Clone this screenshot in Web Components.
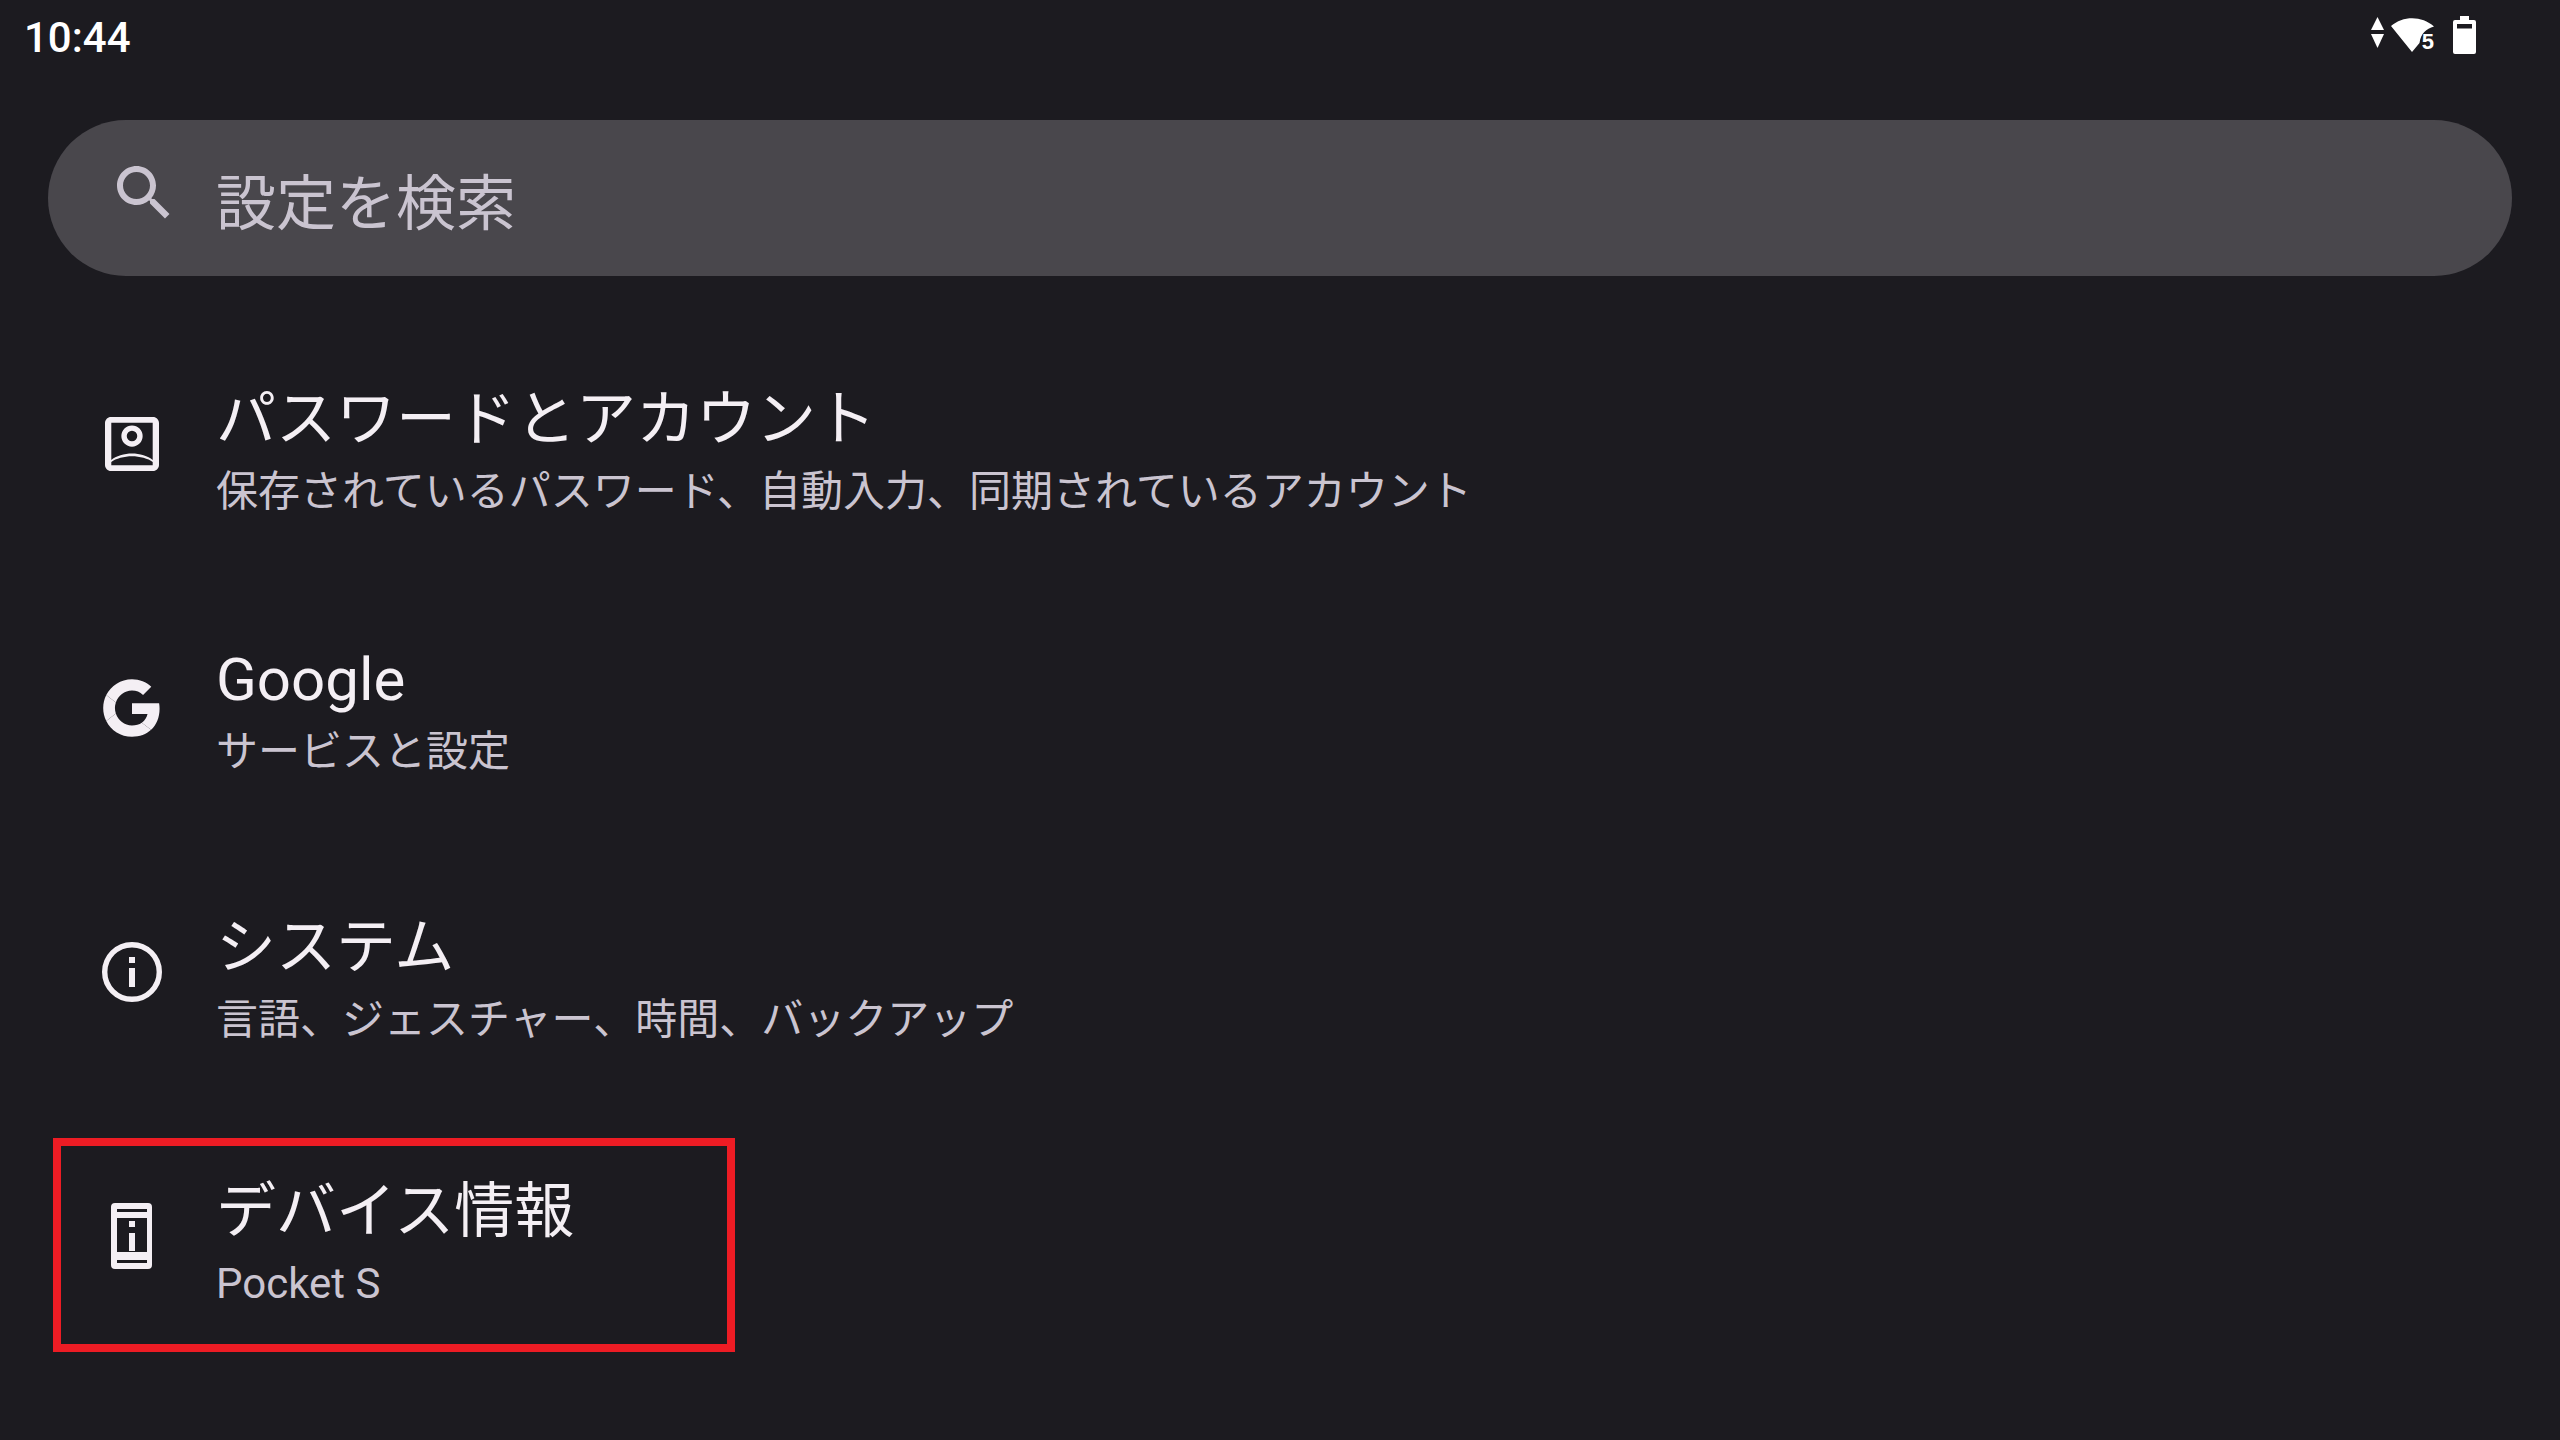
<!DOCTYPE html>
<html lang="ja">
<head>
<meta charset="utf-8">
<title>設定</title>
<style>
    html, body { margin: 0; background: #1c1b20; }
    body {
        width: 2560px;
        height: 1440px;
        overflow: hidden;
        font-family: Roboto, "Noto Sans CJK JP", sans-serif;
    }
</style>
</head>
<body>

<status-bar time="10:44"></status-bar>
<search-bar placeholder="設定を検索"></search-bar>

<settings-list>
    <settings-item title="パスワードとアカウント" summary="保存されているパスワード、自動入力、同期されているアカウント">
        <svg slot="icon" viewBox="0 0 24 24" width="72" height="72" fill="#f4eff4">
            <path fill-rule="evenodd" d="M5 3h14c1.100 0 2 .9 2 2v14c0 1.100-.9 2-2 2H5c-1.100 0-2-.9-2-2V5c0-1.100.9-2 2-2zm.1 1.900v12.400c1.500-1.200 4.400-2.100 6.900-2.100s5.400.9 6.900 2.100V4.900zM5.100 18v1.100h13.800V18c-1.500-1.150-4.400-1.900-6.900-1.900s-5.400.75-6.900 1.900z"/>
            <path fill-rule="evenodd" d="M12 5.800a3.550 3.550 0 1 1 0 7.100 3.550 3.550 0 0 1 0-7.100zm0 1.800a1.750 1.750 0 1 0 0 3.500 1.750 1.750 0 0 0 0-3.500z"/>
        </svg>
    </settings-item>
    <settings-item title="Google" summary="サービスと設定" style="--nudge: -8px">
        <svg slot="icon" viewBox="-6 -6 60 60" width="72" height="72" fill="#f4eff4">
            <path d="M24 9.500c3.540 0 6.710 1.220 9.210 3.600l6.850-6.850C35.900 2.380 30.470 0 24 0 14.620 0 6.510 5.380 2.560 13.220l7.980 6.190C12.430 13.720 17.740 9.500 24 9.500z"/>
            <path d="M46.980 24.550c0-1.570-.15-3.090-.38-4.550H24v9.020h12.940c-.58 2.960-2.260 5.480-4.780 7.180l7.730 6c4.510-4.180 7.090-10.360 7.090-17.650z"/>
            <path d="M10.530 28.590c-.48-1.450-.76-2.990-.76-4.590s.27-3.140.76-4.590l-7.980-6.190C.92 16.460 0 20.120 0 24c0 3.880.92 7.540 2.560 10.780l7.970-6.190z"/>
            <path d="M24 48c6.480 0 11.930-2.130 15.890-5.810l-7.730-6c-2.150 1.450-4.920 2.300-8.160 2.300-6.260 0-11.570-4.220-13.470-9.910l-7.980 6.190C6.510 42.620 14.620 48 24 48z"/>
        </svg>
    </settings-item>
    <settings-item title="システム" summary="言語、ジェスチャー、時間、バックアップ">
        <svg slot="icon" viewBox="0 0 72 72" width="72" height="72" fill="#f4eff4">
            <circle cx="36" cy="36" r="27.300" fill="none" stroke="#f4eff4" stroke-width="5.400"/>
            <rect x="33" y="21" width="6" height="6"/>
            <rect x="33" y="32" width="6" height="19"/>
        </svg>
    </settings-item>
    <settings-item title="デバイス情報" summary="Pocket S" highlight>
        <svg slot="icon" viewBox="0 0 72 72" width="72" height="72" fill="#f4eff4">
            <path fill-rule="evenodd" d="M19 3h33a4 4 0 0 1 4 4v58a4 4 0 0 1-4 4H19a4 4 0 0 1-4-4V7a4 4 0 0 1 4-4zm2 6v3h30V9zm0 9v34h30V18zm0 42v3h30v-3z"/>
            <rect x="33" y="21" width="6" height="6"/>
            <rect x="33" y="33" width="6" height="18"/>
        </svg>
    </settings-item>
</settings-list>

<script>
/* Status bar: clock on the left, signal icons on the right */
const statusTemplate = document.createElement('template');
statusTemplate.innerHTML = `
    <style>
        :host {
            display: flex;
            justify-content: space-between;
            height: 120px;
            padding: 0 84px 0 24px;
            color: #fff;
        }
        .time {
            font: 500 42px/76px Roboto, sans-serif;
        }
        .icons {
            display: flex;
            align-items: flex-start;
            padding-top: 16px;
        }
        .wifi {
            position: relative;
            width: 43px;
            height: 38px;
            margin: 2px 19px 0 7px;
        }
        .wifi span {
            position: absolute;
            right: 0;
            top: 14px;
            font: 700 22px/20px "Liberation Sans", sans-serif;
        }
        svg { display: block; }
    </style>
    <div class="time"></div>
    <div class="icons">
        <svg width="13" height="32" viewBox="0 0 13 32" fill="#fff">
            <path d="M6.500 1 13 14H0z"/>
            <path d="M0 18h13L6.500 32z"/>
        </svg>
        <div class="wifi">
            <svg width="43" height="34" viewBox="0 0 43 34" fill="#fff">
                <path d="M0 8C12-2.500 31-2.500 43 8.500 35 11 30 15 28.500 25L21 34z"/>
            </svg>
            <span>5</span>
        </div>
        <svg width="23" height="38" viewBox="0 0 23 38" fill="#fff">
            <path fill-rule="evenodd" d="M7 0h9v4h5a2 2 0 0 1 2 2v30a2 2 0 0 1-2 2H2a2 2 0 0 1-2-2V6a2 2 0 0 1 2-2h5zM4 8v4.500h15V8z"/>
        </svg>
    </div>
`;

class StatusBar extends HTMLElement {
    constructor() {
        super();
        this.attachShadow({ mode: 'open' });
        this.shadowRoot.appendChild(statusTemplate.content.cloneNode(true));
        this.shadowRoot.querySelector('.time').textContent = this.getAttribute('time');
    }
}
customElements.define('status-bar', StatusBar);


/* Search pill */
const searchTemplate = document.createElement('template');
searchTemplate.innerHTML = `
    <style>
        :host {
            display: flex;
            align-items: center;
            height: 156px;
            margin: 0 48px;
            padding-left: 60px;
            border-radius: 78px;
            background: #49474c;
            color: #cac4d0;
        }
        svg { display: block; margin-top: -10px; }
        .label {
            margin-left: 36px;
            margin-top: 2px;
            font: 400 60px/72px "Noto Sans CJK JP", sans-serif;
        }
    </style>
    <svg width="72" height="72" viewBox="0 0 24 24" fill="#cac4d0">
        <path d="M15.500 14h-.79l-.28-.27C15.410 12.590 16 11.110 16 9.500 16 5.910 13.090 3 9.500 3S3 5.910 3 9.500 5.910 16 9.500 16c1.610 0 3.090-.59 4.230-1.570l.27.28v.79l5 4.990L20.490 19l-4.990-5zm-6 0C7.010 14 5 11.990 5 9.500S7.010 5 9.500 5 14 7.010 14 9.500 11.990 14 9.500 14z"/>
    </svg>
    <div class="label"></div>
`;

class SearchBar extends HTMLElement {
    constructor() {
        super();
        this.attachShadow({ mode: 'open' });
        this.shadowRoot.appendChild(searchTemplate.content.cloneNode(true));
        this.shadowRoot.querySelector('.label').textContent = this.getAttribute('placeholder');
    }
}
customElements.define('search-bar', SearchBar);


/* List wrapper */
class SettingsList extends HTMLElement {
    constructor() {
        super();
        this.attachShadow({ mode: 'open' });
        this.shadowRoot.innerHTML = `
            <style>
                :host { display: block; margin-top: 36px; }
            </style>
            <slot></slot>
        `;
    }
}
customElements.define('settings-list', SettingsList);


/* One row of the list: icon, title, summary */
const itemTemplate = document.createElement('template');
itemTemplate.innerHTML = `
    <style>
        :host {
            display: flex;
            align-items: center;
            position: relative;
            height: 264px;
            padding-left: 96px;
        }
        :host([highlight])::after {
            content: '';
            position: absolute;
            left: 53px;
            top: 34px;
            width: 666px;
            height: 198px;
            border: 8px solid #ed1c24;
        }
        .icon { width: 72px; height: 72px; flex: none; }
        .text {
            margin-left: 48px;
            padding-top: calc(15px + var(--nudge, 0px));
        }
        .title {
            color: #f4eff4;
            font: 400 60px/72px Roboto, "Noto Sans CJK JP", sans-serif;
        }
        .summary {
            margin-top: 8px;
            color: #cac4d0;
            font: 400 42px/56px Roboto, "Noto Sans CJK JP", sans-serif;
        }
    </style>
    <div class="icon"><slot name="icon"></slot></div>
    <div class="text">
        <div class="title"></div>
        <div class="summary"></div>
    </div>
`;

class SettingsItem extends HTMLElement {
    constructor() {
        super();
        this.attachShadow({ mode: 'open' });
        this.shadowRoot.appendChild(itemTemplate.content.cloneNode(true));
        this.shadowRoot.querySelector('.title').textContent = this.getAttribute('title');
        this.shadowRoot.querySelector('.summary').textContent = this.getAttribute('summary');
    }
}
customElements.define('settings-item', SettingsItem);
</script>
</body>
</html>
